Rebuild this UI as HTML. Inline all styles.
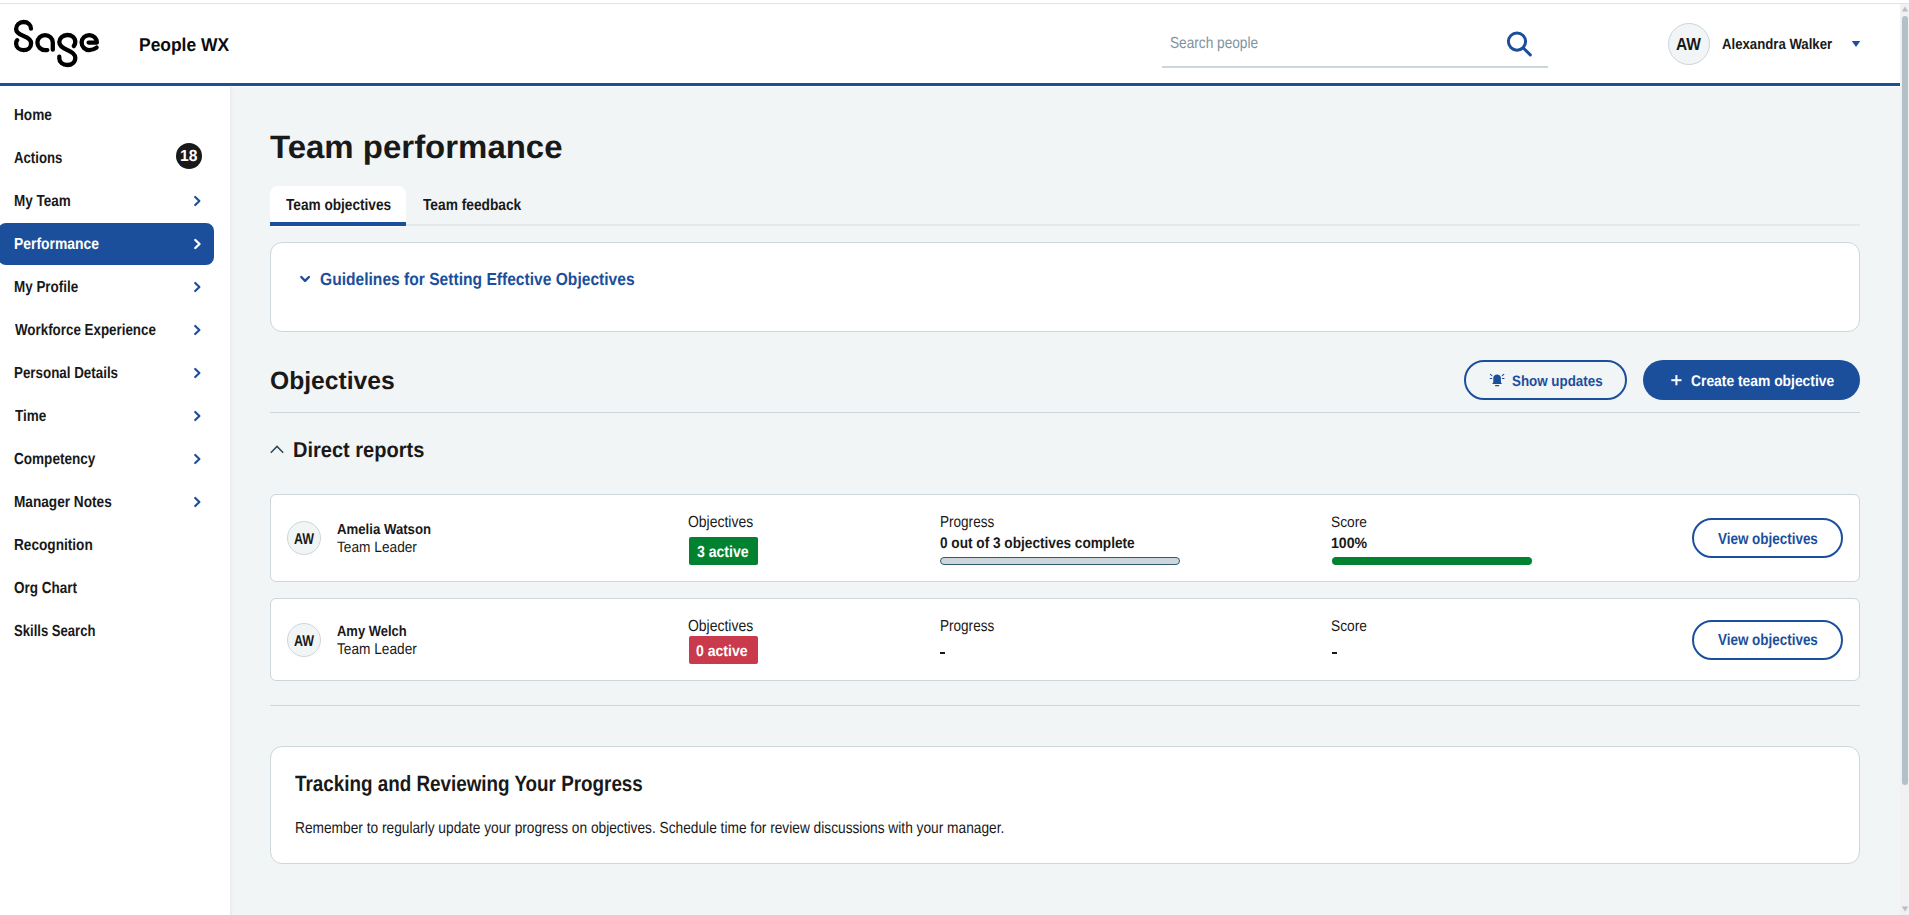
<!DOCTYPE html>
<html><head><meta charset="utf-8"><title>Team performance</title>
<style>
html,body{margin:0;padding:0}
body{width:1909px;height:915px;overflow:hidden;position:relative;background:#f2f5f6;font-family:"Liberation Sans",sans-serif}
.a{position:absolute;box-sizing:border-box}
.t{position:absolute;white-space:nowrap;line-height:1;transform-origin:0 0;font-family:"Liberation Sans",sans-serif;text-rendering:geometricPrecision}
.card{position:absolute;box-sizing:border-box;background:#fff;border:1px solid #ccd6db}
.btn{position:absolute;box-sizing:border-box;border:2px solid #1b4f9c;border-radius:20px}
.av{position:absolute;box-sizing:border-box;border:1px solid #ccd6db;background:#f2f5f6;border-radius:50%}
</style></head><body>
<!-- top strip -->
<div class="a" style="left:0;top:0;width:1909px;height:3px;background:#fff"></div>
<div class="a" style="left:0;top:3px;width:1909px;height:1px;background:#dfe3e1"></div>
<!-- header -->
<div class="a" style="left:0;top:4px;width:1900px;height:83px;background:#fff"></div>
<div class="a" style="left:0;top:83px;width:1900px;height:3px;background:#1b4f9c"></div>
<!-- sidebar -->
<div class="a" style="left:0;top:87px;width:230px;height:828px;background:#fff"></div>
<div class="a" style="left:230px;top:87px;width:3px;height:828px;background:linear-gradient(to right,#e6eaec,#f2f5f6)"></div>
<!-- scrollbar -->
<div class="a" style="left:1900px;top:4px;width:9px;height:911px;background:#f1f1f1"></div>
<svg class="a" style="left:0;top:0" width="1909" height="915" viewBox="0 0 1909 915">
  <polygon points="1905,6.5 1908.2,11.5 1901.8,11.5" fill="#b4c0c7"/>
  <rect x="1902" y="16" width="6" height="769" rx="3" fill="#b4c0c7"/>
  <polygon points="1901.8,906.5 1908.2,906.5 1905,911.5" fill="#b4c0c7"/>
  <!-- Sage logo -->
  <g fill="none" stroke="#000" stroke-width="4.3" stroke-linecap="round" stroke-linejoin="round">
    <path d="M31,28.7 C31,24.5 27.6,22 23.6,22 C19.4,22 16.1,25 16.1,29 C16.1,33 19.5,34.5 23.6,36 C27.7,37.5 31.1,39.3 31.1,43.4 C31.1,47.5 27.8,50.1 23.6,50.1 C19.4,50.1 16.1,47.3 16.1,43.4 C16.1,42.1 16.5,41 17.2,40.2"/>
    <path d="M52.8,49.7 L52.8,42.6 A7.7,7.5 0 1 0 45.1,50.1 L47.3,50.1"/>
    <path d="M73.8,46 C74.8,44.8 75.3,43.5 75.3,42 C75.3,37.9 71.8,35 67.3,35 C62.8,35 59.3,38.1 59.3,42 C59.3,46 62.5,48 67.3,50 C72.1,52 75.3,54 75.3,57.8 C75.3,62.1 71.8,65 67.3,65 C62.8,65 59.3,62.1 59.3,58.6 C59.3,57.8 59.3,57.2 59.3,56.7"/>
    <path d="M88.6,42.55 L96.9,42.55 A7.65,7.5 0 0 0 89.25,35.05 A7.65,7.5 0 0 0 81.6,42.55 A7.65,7.5 0 0 0 89.25,50.05 C91.9,50.05 94.6,49.1 96.6,47.6"/>
  </g>
  <!-- search icon -->
  <circle cx="1517" cy="41.6" r="8.6" fill="none" stroke="#1b4f9c" stroke-width="3"/>
  <line x1="1523.6" y1="48.2" x2="1530.3" y2="54.9" stroke="#1b4f9c" stroke-width="3" stroke-linecap="round"/>
  <!-- user dropdown triangle -->
  <polygon points="1851.8,41 1860.3,41 1856,47" fill="#1b4f9c"/>
</svg>
<div class="a" style="left:1162px;top:66px;width:386px;height:2px;background:#ccd6db"></div>
<div class="av" style="left:1668px;top:23px;width:42px;height:42px"></div>
<!-- sidebar nav -->
<div class="a" style="left:-2px;top:223px;width:216px;height:42px;background:#1b4f9c;border-radius:8px"></div>
<div class="a" style="left:176px;top:143px;width:26px;height:26px;background:#191919;border-radius:50%"></div>
<svg class="a" style="left:0;top:0" width="230" height="915" viewBox="0 0 230 915">
  <g fill="none" stroke="#1b4f9c" stroke-width="2.2" stroke-linecap="round" stroke-linejoin="round">
    <path d="M195.2,197 L199.4,201 L195.2,205"/>
    <path d="M195.2,283 L199.4,287 L195.2,291"/>
    <path d="M195.2,326 L199.4,330 L195.2,334"/>
    <path d="M195.2,369 L199.4,373 L195.2,377"/>
    <path d="M195.2,412 L199.4,416 L195.2,420"/>
    <path d="M195.2,455 L199.4,459 L195.2,463"/>
    <path d="M195.2,498 L199.4,502 L195.2,506"/>
  </g>
  <path d="M195.3,240 L199.5,244 L195.3,248" fill="none" stroke="#fff" stroke-width="2.4" stroke-linecap="round" stroke-linejoin="round"/>
</svg>
<!-- tabs -->
<div class="a" style="left:270px;top:186px;width:136px;height:41px;background:#fff;border-radius:8px 8px 0 0"></div>
<div class="a" style="left:270px;top:222px;width:136px;height:4px;background:#1b4f9c"></div>
<div class="a" style="left:406px;top:224px;width:1454px;height:2px;background:#e3e8eb"></div>
<!-- guidelines card -->
<div class="card" style="left:270px;top:242px;width:1590px;height:90px;border-radius:12px"></div>
<!-- objectives header -->
<div class="a" style="left:270px;top:412px;width:1590px;height:1px;background:#ccd6db"></div>
<div class="btn" style="left:1464px;top:360px;width:163px;height:40px"></div>
<div class="a" style="left:1643px;top:360px;width:217px;height:40px;background:#1b4f9c;border-radius:20px"></div>
<!-- cards -->
<div class="card" style="left:270px;top:494px;width:1590px;height:88px;border-radius:6px"></div>
<div class="card" style="left:270px;top:598px;width:1590px;height:83px;border-radius:6px"></div>
<div class="av" style="left:287px;top:521px;width:34px;height:34px"></div>
<div class="av" style="left:287px;top:623px;width:34px;height:34px"></div>
<div class="a" style="left:689px;top:537px;width:69px;height:28px;background:#008230;border-radius:2px"></div>
<div class="a" style="left:689px;top:636px;width:69px;height:28px;background:#c93a4c;border-radius:2px"></div>
<div class="a" style="left:940px;top:557px;width:240px;height:8px;background:#ccd6db;border:1px solid #335b70;border-radius:4px"></div>
<div class="a" style="left:1332px;top:557px;width:200px;height:8px;background:#008230;border-radius:4px"></div>
<div class="btn" style="left:1692px;top:518px;width:151px;height:40px"></div>
<div class="btn" style="left:1692px;top:620px;width:151px;height:40px"></div>
<div class="a" style="left:940px;top:652px;width:5px;height:2px;background:#191919"></div>
<div class="a" style="left:1332px;top:652px;width:5px;height:2px;background:#191919"></div>
<div class="a" style="left:270px;top:705px;width:1590px;height:1px;background:#ccd6db"></div>
<div class="card" style="left:270px;top:746px;width:1590px;height:118px;border-radius:12px"></div>
<svg class="a" style="left:0;top:0" width="1909" height="915" viewBox="0 0 1909 915">
  <!-- guidelines chevron -->
  <path d="M301.3,277 L305.1,280.8 L308.9,277" fill="none" stroke="#1b4f9c" stroke-width="2.4" stroke-linecap="round" stroke-linejoin="round"/>
  <!-- direct reports chevron up -->
  <path d="M270.8,452.8 L277,446.4 L283.2,452.8" fill="none" stroke="#2c4a5c" stroke-width="1.5"/>
  <!-- bell -->
  <g fill="#1b4f9c">
    <path d="M1492.2,384 L1493.3,382.3 L1493.3,378 C1493.3,375.8 1495,374.4 1497.1,374.4 C1499.2,374.4 1500.9,375.8 1500.9,378 L1500.9,382.3 L1502,384 Z"/>
    <rect x="1495" y="385" width="4.2" height="1.3" rx="0.6"/>
  </g>
  <g stroke="#1b4f9c" stroke-width="1.1" stroke-linecap="round">
    <line x1="1490.4" y1="374.4" x2="1491.9" y2="375.6"/>
    <line x1="1503.8" y1="374.4" x2="1502.3" y2="375.6"/>
    <line x1="1490.2" y1="378.5" x2="1491.8" y2="378.5"/>
    <line x1="1502.4" y1="378.5" x2="1504" y2="378.5"/>
  </g>
  <!-- plus -->
  <g stroke="#fff" stroke-width="2">
    <line x1="1671.3" y1="380.2" x2="1681.5" y2="380.2"/>
    <line x1="1676.4" y1="375.1" x2="1676.4" y2="385.3"/>
  </g>
</svg>
<div class="t" style="left:138.92px;top:36.20px;font-size:18.5px;font-weight:700;color:#0b0b0b;transform:scaleX(0.9424)">People WX</div>
<div class="t" style="left:1169.56px;top:36.20px;font-size:16.0px;font-weight:400;color:#8093a0;transform:scaleX(0.8531)">Search people</div>
<div class="t" style="left:1676.06px;top:36.20px;font-size:17.5px;font-weight:700;color:#191919;transform:scaleX(0.8869)">AW</div>
<div class="t" style="left:1721.67px;top:37.20px;font-size:15.0px;font-weight:700;color:#191919;transform:scaleX(0.8786)">Alexandra Walker</div>
<div class="t" style="left:179.73px;top:149.20px;font-size:16.0px;font-weight:700;color:#ffffff;transform:scaleX(0.9723)">18</div>
<div class="t" style="left:269.92px;top:131.20px;font-size:32.5px;font-weight:700;color:#191919;transform:scaleX(1.0144)">Team performance</div>
<div class="t" style="left:285.89px;top:198.20px;font-size:16.0px;font-weight:700;color:#191919;transform:scaleX(0.8522)">Team objectives</div>
<div class="t" style="left:422.79px;top:198.20px;font-size:16.0px;font-weight:700;color:#191919;transform:scaleX(0.8586)">Team feedback</div>
<div class="t" style="left:320.03px;top:271.20px;font-size:17.5px;font-weight:700;color:#1b4f9c;transform:scaleX(0.8913)">Guidelines for Setting Effective Objectives</div>
<div class="t" style="left:269.51px;top:369.20px;font-size:25.0px;font-weight:700;color:#191919;transform:scaleX(0.9865)">Objectives</div>
<div class="t" style="left:293.10px;top:440.20px;font-size:21.5px;font-weight:700;color:#191919;transform:scaleX(0.9313)">Direct reports</div>
<div class="t" style="left:1511.55px;top:374.20px;font-size:15.0px;font-weight:700;color:#1b4f9c;transform:scaleX(0.8914)">Show updates</div>
<div class="t" style="left:1691.24px;top:374.20px;font-size:15.5px;font-weight:700;color:#ffffff;transform:scaleX(0.8936)">Create team objective</div>
<div class="t" style="left:293.90px;top:532.20px;font-size:15.5px;font-weight:700;color:#191919;transform:scaleX(0.8041)">AW</div>
<div class="t" style="left:336.76px;top:523.20px;font-size:14.5px;font-weight:700;color:#191919;transform:scaleX(0.9097)">Amelia Watson</div>
<div class="t" style="left:336.76px;top:540.20px;font-size:15.0px;font-weight:400;color:#191919;transform:scaleX(0.9128)">Team Leader</div>
<div class="t" style="left:688.35px;top:515.20px;font-size:16.0px;font-weight:400;color:#191919;transform:scaleX(0.8722)">Objectives</div>
<div class="t" style="left:696.67px;top:545.20px;font-size:16.0px;font-weight:700;color:#ffffff;transform:scaleX(0.8779)">3 active</div>
<div class="t" style="left:939.54px;top:515.20px;font-size:16.0px;font-weight:400;color:#191919;transform:scaleX(0.8467)">Progress</div>
<div class="t" style="left:940.05px;top:536.20px;font-size:15.5px;font-weight:700;color:#191919;transform:scaleX(0.8795)">0 out of 3 objectives complete</div>
<div class="t" style="left:1331.11px;top:515.20px;font-size:15.0px;font-weight:400;color:#191919;transform:scaleX(0.9166)">Score</div>
<div class="t" style="left:1330.86px;top:536.20px;font-size:15.0px;font-weight:700;color:#191919;transform:scaleX(0.9432)">100%</div>
<div class="t" style="left:1717.50px;top:532.20px;font-size:16.0px;font-weight:700;color:#1b4f9c;transform:scaleX(0.8398)">View objectives</div>
<div class="t" style="left:293.90px;top:634.20px;font-size:15.5px;font-weight:700;color:#191919;transform:scaleX(0.8041)">AW</div>
<div class="t" style="left:336.68px;top:624.20px;font-size:15.0px;font-weight:700;color:#191919;transform:scaleX(0.8644)">Amy Welch</div>
<div class="t" style="left:336.77px;top:642.20px;font-size:15.5px;font-weight:400;color:#191919;transform:scaleX(0.8823)">Team Leader</div>
<div class="t" style="left:688.35px;top:619.20px;font-size:16.0px;font-weight:400;color:#191919;transform:scaleX(0.8722)">Objectives</div>
<div class="t" style="left:696.33px;top:644.20px;font-size:15.5px;font-weight:700;color:#ffffff;transform:scaleX(0.9058)">0 active</div>
<div class="t" style="left:939.54px;top:619.20px;font-size:16.0px;font-weight:400;color:#191919;transform:scaleX(0.8467)">Progress</div>
<div class="t" style="left:1331.13px;top:619.20px;font-size:15.5px;font-weight:400;color:#191919;transform:scaleX(0.8872)">Score</div>
<div class="t" style="left:1717.50px;top:633.20px;font-size:16.0px;font-weight:700;color:#1b4f9c;transform:scaleX(0.8398)">View objectives</div>
<div class="t" style="left:295.29px;top:773.20px;font-size:22.0px;font-weight:700;color:#191919;transform:scaleX(0.8560)">Tracking and Reviewing Your Progress</div>
<div class="t" style="left:294.72px;top:821.20px;font-size:16.0px;font-weight:400;color:#191919;transform:scaleX(0.8576)">Remember to regularly update your progress on objectives. Schedule time for review discussions with your manager.</div>
<div class="t" style="left:13.84px;top:108.20px;font-size:16.0px;font-weight:700;color:#191919;transform:scaleX(0.8515)">Home</div>
<div class="t" style="left:14.49px;top:151.20px;font-size:16.0px;font-weight:700;color:#191919;transform:scaleX(0.8243)">Actions</div>
<div class="t" style="left:13.85px;top:194.20px;font-size:16.0px;font-weight:700;color:#191919;transform:scaleX(0.8415)">My Team</div>
<div class="t" style="left:13.82px;top:237.20px;font-size:16.0px;font-weight:700;color:#ffffff;transform:scaleX(0.8676)">Performance</div>
<div class="t" style="left:13.85px;top:280.20px;font-size:16.0px;font-weight:700;color:#191919;transform:scaleX(0.8401)">My Profile</div>
<div class="t" style="left:14.80px;top:323.20px;font-size:16.0px;font-weight:700;color:#191919;transform:scaleX(0.8351)">Workforce Experience</div>
<div class="t" style="left:13.86px;top:366.20px;font-size:16.0px;font-weight:700;color:#191919;transform:scaleX(0.8358)">Personal Details</div>
<div class="t" style="left:14.69px;top:409.20px;font-size:16.0px;font-weight:700;color:#191919;transform:scaleX(0.8440)">Time</div>
<div class="t" style="left:14.27px;top:452.20px;font-size:16.0px;font-weight:700;color:#191919;transform:scaleX(0.8472)">Competency</div>
<div class="t" style="left:13.84px;top:495.20px;font-size:16.0px;font-weight:700;color:#191919;transform:scaleX(0.8523)">Manager Notes</div>
<div class="t" style="left:13.84px;top:538.20px;font-size:16.0px;font-weight:700;color:#191919;transform:scaleX(0.8521)">Recognition</div>
<div class="t" style="left:14.27px;top:581.20px;font-size:16.0px;font-weight:700;color:#191919;transform:scaleX(0.8447)">Org Chart</div>
<div class="t" style="left:14.39px;top:624.20px;font-size:16.0px;font-weight:700;color:#191919;transform:scaleX(0.8173)">Skills Search</div>
</body></html>
